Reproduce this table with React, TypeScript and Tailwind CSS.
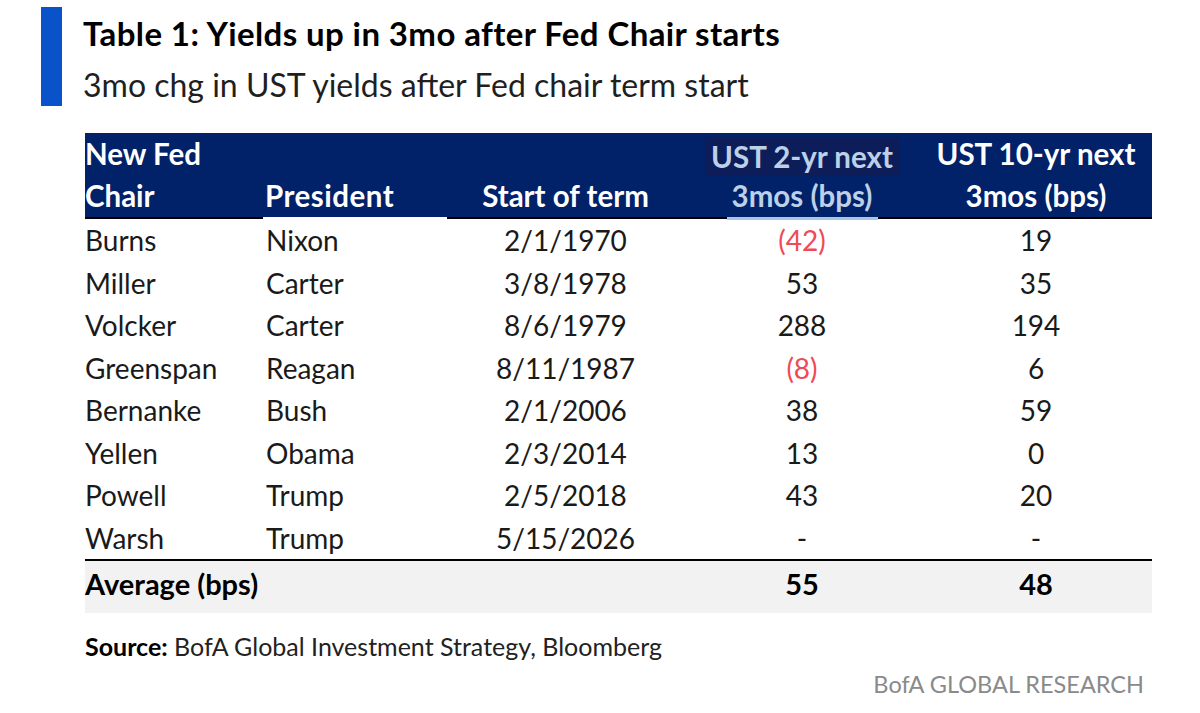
const rows = [
  { chair: "Burns", president: "Nixon", start: "2/1/1970", two: "(42)", ten: "19" },
  { chair: "Miller", president: "Carter", start: "3/8/1978", two: "53", ten: "35" },
  { chair: "Volcker", president: "Carter", start: "8/6/1979", two: "288", ten: "194" },
  { chair: "Greenspan", president: "Reagan", start: "8/11/1987", two: "(8)", ten: "6" },
  { chair: "Bernanke", president: "Bush", start: "2/1/2006", two: "38", ten: "59" },
  { chair: "Yellen", president: "Obama", start: "2/3/2014", two: "13", ten: "0" },
  { chair: "Powell", president: "Trump", start: "2/5/2018", two: "43", ten: "20" },
  { chair: "Warsh", president: "Trump", start: "5/15/2026", two: "-", ten: "-" },
];

// negative values are shown in parens and red
function isNeg(v: string) {
  return v.startsWith("(");
}

export default function App() {
  return (
    <div className="w-[1200px] h-[713px] bg-white pl-[41px] pt-[7px] font-['Lato',sans-serif] text-[#1a1a1a]">
      {/* Title block */}
      <div className="flex h-[99px]">
        <div className="w-[21px] h-full bg-[#0a52c9]" />
        <div className="ml-[21px] pt-[6px] flex flex-col">
          <h1 className="text-[33px] leading-[40px] font-bold tracking-[0.4px] text-black">
            Table 1: Yields up in 3mo after Fed Chair starts
          </h1>
          <p className="mt-[12px] text-[32px] leading-[40px] text-[#1f1f1f]">
            3mo chg in UST yields after Fed chair term start
          </p>
        </div>
      </div>

      {/* Table */}
      <div className="ml-[44px] mt-[27px] w-[1067px]">
        <div className="grid grid-cols-[178px_184px_237px_236px_232px] bg-[#012169] text-white font-bold text-[29.5px] leading-[42px] h-[84px]">
          <div className="flex flex-col">
            <span>New Fed</span>
            <span>Chair</span>
          </div>
          <div className="flex flex-col justify-end pl-[2px]">
            <span className="tracking-[0.5px]">President</span>
          </div>
          <div className="flex flex-col justify-end items-center">
            <span>Start of term</span>
          </div>
          <div className="flex flex-col items-center text-[#bcd0e8]">
            <span className="mt-[5px] leading-[37px] px-[6px] bg-[#0c1d5a]">UST 2-yr next</span>
            <span className="leading-[42px] px-[5px]">3mos (bps)</span>
          </div>
          <div className="flex flex-col items-center">
            <span>UST 10-yr next</span>
            <span>3mos (bps)</span>
          </div>
        </div>
        <div className="flex h-[2px]">
          <div className="w-[178px] bg-black" />
          <div className="w-[184px] bg-white" />
          <div className="w-[280px] bg-black" />
          <div className="w-[151px] h-[3px] bg-[#a9c6e6]" />
          <div className="flex-1 bg-black" />
        </div>

        {rows.map((r) => (
          <div
            key={r.chair}
            className="grid grid-cols-[178px_184px_237px_236px_232px] h-[42.5px] items-center text-[28px] leading-[42px]"
          >
            <span>{r.chair}</span>
            <span className="pl-[3px]">{r.president}</span>
            <span className="text-center">{r.start}</span>
            <span className={isNeg(r.two) ? "text-center text-[#ef4a55]" : "text-center"}>{r.two}</span>
            <span className="text-center">{r.ten}</span>
          </div>
        ))}

        <div className="h-[2px] bg-black" />
        <div className="grid grid-cols-[178px_184px_237px_236px_232px] h-[52px] items-center pb-[6px] bg-[#f2f2f2] text-[29px] leading-[40px] font-bold text-black">
          <span className="col-span-3">Average (bps)</span>
          <span className="text-center">55</span>
          <span className="text-center">48</span>
        </div>

        <p className="mt-[16px] text-[25px] leading-[34px] text-[#222]">
          <span className="font-bold text-black">Source:</span> BofA Global Investment Strategy, Bloomberg
        </p>
      </div>

      <div className="mt-[4px] pr-[56px] text-right text-[23.5px] leading-[34px] text-[#8a8a8a]">
        BofA GLOBAL RESEARCH
      </div>
    </div>
  );
}
